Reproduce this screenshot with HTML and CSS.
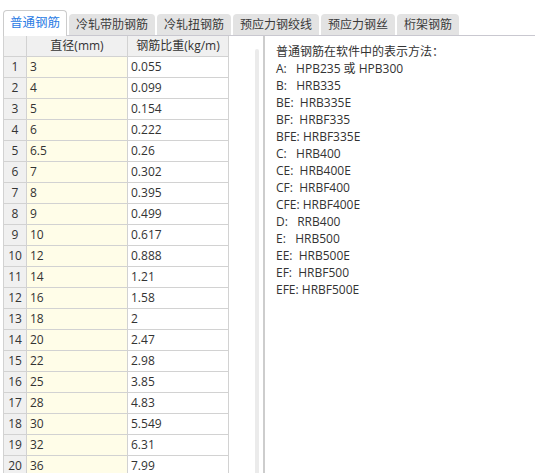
FILE: index.html
```html
<!DOCTYPE html>
<html lang="zh-CN">
<head>
<meta charset="utf-8">
<title>钢筋比重</title>
<link rel="stylesheet" href="styles.css">
</head>
<body>
<div class="tabs">
  <div class="tab active">普通钢筋</div>
  <div class="tab">冷轧带肋钢筋</div>
  <div class="tab">冷轧扭钢筋</div>
  <div class="tab">预应力钢绞线</div>
  <div class="tab">预应力钢丝</div>
  <div class="tab">桁架钢筋</div>
</div>
<div class="body">
  <div class="left">
    <table class="grid">
      <thead>
        <tr><th class="num"></th><th class="dia">直径(mm)</th><th class="wt">钢筋比重(kg/m)</th></tr>
      </thead>
      <tbody>
        <tr><td class="num">1</td><td class="dia">3</td><td class="wt">0.055</td></tr>
        <tr><td class="num">2</td><td class="dia">4</td><td class="wt">0.099</td></tr>
        <tr><td class="num">3</td><td class="dia">5</td><td class="wt">0.154</td></tr>
        <tr><td class="num">4</td><td class="dia">6</td><td class="wt">0.222</td></tr>
        <tr><td class="num">5</td><td class="dia">6.5</td><td class="wt">0.26</td></tr>
        <tr><td class="num">6</td><td class="dia">7</td><td class="wt">0.302</td></tr>
        <tr><td class="num">7</td><td class="dia">8</td><td class="wt">0.395</td></tr>
        <tr><td class="num">8</td><td class="dia">9</td><td class="wt">0.499</td></tr>
        <tr><td class="num">9</td><td class="dia">10</td><td class="wt">0.617</td></tr>
        <tr><td class="num">10</td><td class="dia">12</td><td class="wt">0.888</td></tr>
        <tr><td class="num">11</td><td class="dia">14</td><td class="wt">1.21</td></tr>
        <tr><td class="num">12</td><td class="dia">16</td><td class="wt">1.58</td></tr>
        <tr><td class="num">13</td><td class="dia">18</td><td class="wt">2</td></tr>
        <tr><td class="num">14</td><td class="dia">20</td><td class="wt">2.47</td></tr>
        <tr><td class="num">15</td><td class="dia">22</td><td class="wt">2.98</td></tr>
        <tr><td class="num">16</td><td class="dia">25</td><td class="wt">3.85</td></tr>
        <tr><td class="num">17</td><td class="dia">28</td><td class="wt">4.83</td></tr>
        <tr><td class="num">18</td><td class="dia">30</td><td class="wt">5.549</td></tr>
        <tr><td class="num">19</td><td class="dia">32</td><td class="wt">6.31</td></tr>
        <tr><td class="num">20</td><td class="dia">36</td><td class="wt">7.99</td></tr>
      </tbody>
    </table>
    <div class="spacer"></div>
    <div class="scrollbar"></div>
  </div>
  <div class="right">
    <div class="line">普通钢筋在软件中的表示方法：</div>
    <div class="line">A:   HPB235 或 HPB300</div>
    <div class="line">B:   HRB335</div>
    <div class="line">BE:  HRB335E</div>
    <div class="line">BF:  HRBF335</div>
    <div class="line">BFE: HRBF335E</div>
    <div class="line">C:   HRB400</div>
    <div class="line">CE:  HRB400E</div>
    <div class="line">CF:  HRBF400</div>
    <div class="line">CFE: HRBF400E</div>
    <div class="line">D:   RRB400</div>
    <div class="line">E:   HRB500</div>
    <div class="line">EE:  HRB500E</div>
    <div class="line">EF:  HRBF500</div>
    <div class="line">EFE: HRBF500E</div>
  </div>
</div>
</body>
</html>
```

FILE: styles.css
```css
html, body {
  margin: 0;
  padding: 0;
  background: #ffffff;
  height: 100%;
  overflow: hidden;
}
body {
  font-family: "Open Sans", "Noto Sans CJK SC", sans-serif;
  font-size: 12px;
  color: #333333;
}
.tabs {
  display: flex;
  align-items: flex-end;
  gap: 2px;
  margin-left: 3px;
  height: 35px;
  border-bottom: 1px solid #c9c8d0;
  box-sizing: content-box;
}
.tab {
  height: 21px;
  line-height: 21px;
  padding: 0 7px;
  background: #e3e3e3;
  border-radius: 4px 4px 0 0;
  white-space: nowrap;
  color: #3a3a3a;
}
.tab.active {
  height: 24px;
  line-height: 24px;
  margin-bottom: -1px;
  padding: 0 6px 1px;
  background: #ffffff;
  border: 1px solid #cccccc;
  border-bottom: none;
  color: #2a7be4;
  font-size: 12.5px;
}
.body {
  display: flex;
  height: calc(100% - 36px);
}
.left {
  display: flex;
  width: 263px;
  padding-left: 3px;
  box-sizing: border-box;
}
.grid {
  border-collapse: collapse;
  table-layout: fixed;
  width: 226px;
  align-self: flex-start;
  border-left: 1px solid #d2d2d2;
}
.grid th, .grid td {
  height: 20px;
  padding: 0 3px;
  border-right: 1px solid #d2d2d2;
  border-bottom: 1px solid #d2d2d2;
  white-space: nowrap;
  overflow: hidden;
  font-weight: normal;
  text-align: left;
  line-height: 20px;
}
.grid th {
  background: #f0f0f0;
  text-align: center;
}
.grid .num {
  width: 16px;
  text-align: center;
  background: #f0f0f0;
}
.grid th.num { width: 16px; }
.grid th.dia, .grid th.wt { width: 94px; }
.grid td.dia {
  background: #fffde8;
}
.grid td.wt {
  background: #ffffff;
}
.spacer { flex: 1; }
.scrollbar {
  width: 4px;
  margin-top: 13px;
  margin-right: 4px;
  background: #ebebeb;
  border-radius: 2px 2px 0 0;
}
.right {
  flex: 1;
  border-left: 2px solid #cdcdcd;
  padding: 7px 0 0 11px;
}
.line {
  line-height: 17px;
  height: 17px;
  white-space: pre;
}
```
